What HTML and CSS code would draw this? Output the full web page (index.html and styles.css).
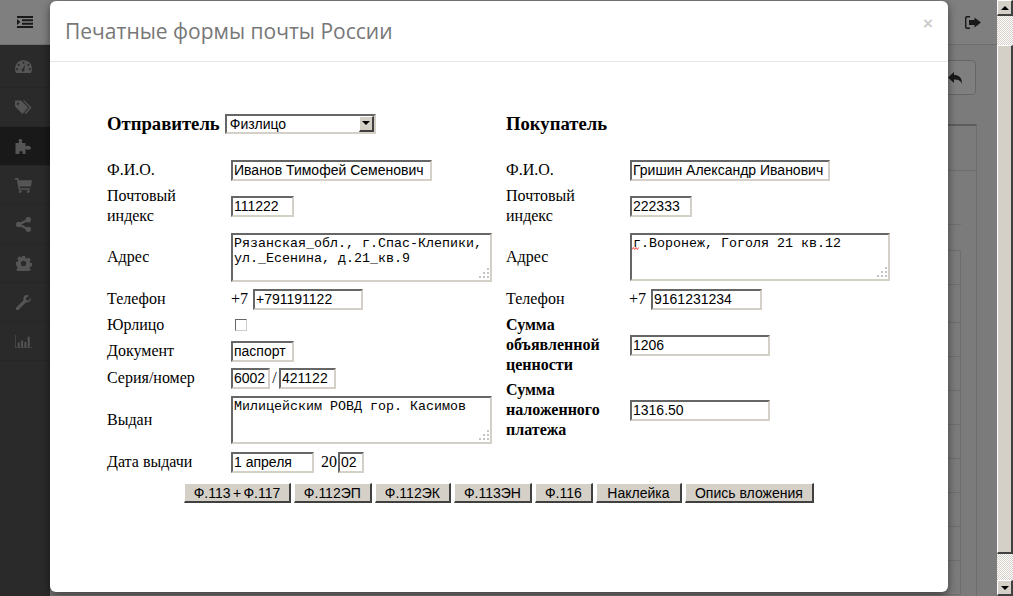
FILE: index.html
```html
<!DOCTYPE html>
<html lang="ru">
<head>
    <meta charset="UTF-8">
    <title>Печатные формы почты России</title>
    <link rel="stylesheet" href="styles.css">
</head>
<body>
    <div class="viewport">
        <div class="sidebar">
            <div class="sidebar-top">
                <svg class="icon-toggle" viewBox="0 0 16 12"><path d="M0 0h16v2H0zM5 3.3h11v2H5zM5 6.7h11v2H5zM0 10h16v2H0zM0 3l3.5 3L0 9z"/></svg>
            </div>
            <div class="side-item side-first">
                <svg viewBox="0 0 16 12"><path fill-rule="evenodd" d="M8 0a8 8 0 0 1 8 8c0 1.500-.3 2.800-1 4H1C.3 10.800 0 9.500 0 8a8 8 0 0 1 8-8zM8 1.500a1 1 0 1 0 0 2 1 1 0 0 0 0-2zM3.500 3.500a1 1 0 1 0 0 2 1 1 0 0 0 0-2zM12.500 3.500a1 1 0 1 0 0 2 1 1 0 0 0 0-2zM2 7.500a1 1 0 1 0 0 2 1 1 0 0 0 0-2zM14 7.500a1 1 0 1 0 0 2 1 1 0 0 0 0-2zM9.500 4L7.200 8.200a1.300 1.300 0 1 0 1.600.6z"/></svg>
            </div>
            <div class="side-item">
                <svg viewBox="0 0 17 14"><path fill-rule="evenodd" d="M0 1a1 1 0 0 1 1-1h5l7 7-5.500 6.500L0 6zM3 2a1.200 1.200 0 1 0 0 2.400A1.200 1.200 0 0 0 3 2z"/><path d="M8 0h1.500l7 7-5.500 6.500-1.300-1 4.800-5.500z"/></svg>
            </div>
            <div class="side-item side-active">
                <svg viewBox="0 0 16 15"><path d="M5 0c1.500 0 2 1 1.500 2.500L6.500 4H10v3.500c1.500-.8 2.500-.8 4-.2 1 .5 1.500 1 1.500 1.700s-.5 1.200-1.500 1.500c-1.500.5-2.500.2-4-.5V15H7c.5-2-.2-3-1.500-3S3.500 13 4 15H0V4h3.500c.3-1.500-.5-1.500-.5-2.500C3 .5 4 0 5 0z"/></svg>
            </div>
            <div class="side-item">
                <svg viewBox="0 0 16 14"><path d="M0 0h3l.4 2H16l-1 6H4.500l.3 1.500H14V11H3.500L1.800 1.500H0z"/><circle cx="5" cy="12.700" r="1.300"/><circle cx="12.500" cy="12.700" r="1.300"/></svg>
            </div>
            <div class="side-item">
                <svg viewBox="0 0 14 14"><circle cx="11.500" cy="2.500" r="2.500"/><circle cx="2.500" cy="7" r="2.500"/><circle cx="11.500" cy="11.500" r="2.500"/><path d="M2.500 7l9-4.500M2.500 7l9 4.500" stroke-width="2" class="share-line"/></svg>
            </div>
            <div class="side-item">
                <svg viewBox="0 0 14 14"><path fill-rule="evenodd" d="M5.500 0h3l.4 2 1.200.5L11.800 1.400l2 2-1.100 1.700.5 1.200 1.800.3v3l-1.800.4-.5 1.200 1.100 1.600-2 2-1.700-1.100-1.200.5-.4 1.800h-3l-.4-1.800-1.200-.5-1.600 1.100-2-2 1.100-1.700-.5-1.200L0 8.500v-3l1.800-.3.500-1.200L1.200 2.300l2-2L4.900 1.500 6 1zM7 4.500a2.500 2.500 0 1 0 0 5 2.500 2.500 0 0 0 0-5z"/></svg>
            </div>
            <div class="side-item">
                <svg viewBox="0 0 15 15"><path d="M10.500 0c1 0 2 .3 2.500.8L9.800 3.300l.6 2 2 .5L15 2.800c.3 2.700-2.300 5.400-5.200 4.700L2.800 14.500c-1 1-2 .8-2.500.2-.6-.6-.7-1.600.2-2.400l7-7C6.900 2.700 8 0 10.500 0z"/></svg>
            </div>
            <div class="side-item">
                <svg viewBox="0 0 18 14"><path d="M0 0h.6v13.400H18v.6H0zM3 8h2v5H3zM6.500 6h2v7h-2zM10 7.500h2V13h-2zM13.500 2h2v11h-2z"/></svg>
            </div>
        </div>
        <div class="main">
            <div class="topbar">
                <svg class="icon-logout" viewBox="0 0 16 13"><path d="M5 0v1.400H2.200c-.5 0-.8.300-.8.800v8.600c0 .5.300.8.800.8H5V13H2c-1.200 0-2-.8-2-2V2C0 .8.800 0 2 0z"/><path d="M9.500 1.500L16 6.500l-6.500 5V9H4V4h5.500z"/></svg>
            </div>
            <div class="toolbar">
                <div class="back-btn">
                    <svg viewBox="0 0 14 12"><path d="M6 0v3c5 0 8 2.500 8 9-1.500-3.500-3.500-4.500-8-4.500V11L0 5.500z"/></svg>
                </div>
            </div>
            <div class="panel">
                <div class="panel-heading"></div>
                <div class="panel-rule"></div>
                <div class="grid-rows">
                    <div class="grid-row"></div>
                    <div class="grid-row grid-row-tall"></div>
                    <div class="grid-row"></div>
                    <div class="grid-row"></div>
                    <div class="grid-row"></div>
                    <div class="grid-row"></div>
                    <div class="grid-row"></div>
                    <div class="grid-row"></div>
                    <div class="grid-row"></div>
                    <div class="grid-row"></div>
                </div>
            </div>
        </div>

        <div class="overlay"></div>

        <div class="modal">
            <div class="modal-header">
                <h4>Печатные формы почты России</h4>
                <span class="close">×</span>
            </div>
            <div class="modal-body">
                <div class="columns">
                    <div class="column">
                        <div class="col-title">
                            <b>Отправитель</b>
                            <div class="select-wrap">
                                <select class="type-select"><option>Физлицо</option></select>
                                <span class="select-btn"><span class="arrow-down"></span></span>
                            </div>
                        </div>
                        <div class="fields sender">
                            <label>Ф.И.О.</label>
                            <div><input class="w-name" type="text" value="Иванов Тимофей Семенович"></div>
                            <label>Почтовый<br>индекс</label>
                            <div><input class="w-zip" type="text" value="111222"></div>
                            <label>Адрес</label>
                            <div class="area-wrap">
                                <textarea class="w-area" spellcheck="false">Рязанская_обл., г.Спас-Клепики, ул._Есенина, д.21_кв.9</textarea>
                                <svg class="grip" viewBox="0 0 11 11"><path d="M8 0h2v2H8zM4 4h2v2H4zM8 4h2v2H8zM0 8h2v2H0zM4 8h2v2H4zM8 8h2v2H8z"/></svg>
                            </div>
                            <label>Телефон</label>
                            <div class="inline"><span class="prefix">+7</span><input class="w-phone" type="text" value="+791191122"></div>
                            <label>Юрлицо</label>
                            <div><input class="check" type="checkbox"></div>
                            <label>Документ</label>
                            <div><input class="w-zip" type="text" value="паспорт"></div>
                            <label>Серия/номер</label>
                            <div class="inline"><input class="w-serial" type="text" value="6002"><span class="slash">/</span><input class="w-number" type="text" value="421122"></div>
                            <label>Выдан</label>
                            <div class="area-wrap">
                                <textarea class="w-area w-area-short" spellcheck="false">Милицейским РОВД гор. Касимов</textarea>
                                <svg class="grip" viewBox="0 0 11 11"><path d="M8 0h2v2H8zM4 4h2v2H4zM8 4h2v2H8zM0 8h2v2H0zM4 8h2v2H4zM8 8h2v2H8z"/></svg>
                            </div>
                            <label>Дата выдачи</label>
                            <div class="inline"><input class="w-date" type="text" value="1 апреля"><span class="century">20</span><input class="w-year" type="text" value="02"></div>
                        </div>
                    </div>
                    <div class="column">
                        <div class="col-title"><b>Покупатель</b></div>
                        <div class="fields buyer">
                            <label>Ф.И.О.</label>
                            <div><input class="w-name-b" type="text" value="Гришин Александр Иванович"></div>
                            <label>Почтовый<br>индекс</label>
                            <div><input class="w-zip-b" type="text" value="222333"></div>
                            <label>Адрес</label>
                            <div class="area-wrap">
                                <textarea class="w-area-b" spellcheck="false">г.Воронеж, Гоголя 21 кв.12</textarea>
                                <svg class="squiggle" viewBox="0 0 8 3"><path d="M0 2.500l1.300-2 1.400 2 1.300-2 1.300 2 1.400-2"/></svg>
                                <svg class="grip" viewBox="0 0 11 11"><path d="M8 0h2v2H8zM4 4h2v2H4zM8 4h2v2H8zM0 8h2v2H0zM4 8h2v2H4zM8 8h2v2H8z"/></svg>
                            </div>
                            <label>Телефон</label>
                            <div class="inline"><span class="prefix prefix-b">+7</span><input class="w-phone-b" type="text" value="9161231234"></div>
                            <label class="strong">Сумма<br>объявленной<br>ценности</label>
                            <div><input class="w-sum" type="text" value="1206"></div>
                            <label class="strong">Сумма<br>наложенного<br>платежа</label>
                            <div><input class="w-sum" type="text" value="1316.50"></div>
                        </div>
                    </div>
                </div>
                <div class="actions">
                    <button type="button" class="btn-first">Ф.113 + Ф.117</button>
                    <button type="button">Ф.112ЭП</button>
                    <button type="button">Ф.112ЭК</button>
                    <button type="button">Ф.113ЭН</button>
                    <button type="button">Ф.116</button>
                    <button type="button" class="btn-wide">Наклейка</button>
                    <button type="button">Опись вложения</button>
                </div>
            </div>
        </div>
    </div>

    <div class="scrollbar">
        <div class="sb-btn"><span class="arrow-up"></span></div>
        <div class="sb-track"><div class="sb-thumb"></div></div>
        <div class="sb-btn"><span class="arrow-down"></span></div>
    </div>
</body>
</html>
```

FILE: styles.css
```css
html, body {
    margin: 0;
    height: 596px;
    overflow: hidden;
}
body {
    display: flex;
    font-family: "Liberation Serif", serif;
    background-color: #f7f7f7;
}
.viewport {
    position: relative;
    flex: 1;
    display: flex;
    overflow: hidden;
}

/* page behind the dialog */
.sidebar {
    width: 50px;
    flex-shrink: 0;
    background-color: #555;
}
.sidebar-top {
    height: 44px;
    background-color: #fff;
    border-bottom: 1px solid #ddd;
    display: flex;
    align-items: center;
    justify-content: center;
}
.icon-toggle {
    width: 16px;
    height: 12px;
    fill: #333;
}
.side-item {
    height: 38px;
    border-bottom: 1px solid #4c4c4c;
    display: flex;
    align-items: center;
    justify-content: center;
    padding-right: 4px;
}
.side-first {
    height: 42px;
}
.side-item svg {
    width: 17px;
    height: 15px;
    fill: #aaa;
}
.share-line {
    stroke: #aaa;
    fill: none;
}
.side-active {
    background-color: #333;
}
.main {
    flex: 1;
    min-width: 0;
}
.topbar {
    height: 44px;
    background-color: #fff;
    border-bottom: 1px solid #ddd;
    display: flex;
    align-items: center;
    justify-content: flex-end;
    padding-right: 16px;
}
.icon-logout {
    width: 16px;
    height: 13px;
    fill: #333;
}
.toolbar {
    height: 79px;
    display: flex;
    justify-content: flex-end;
    padding: 15px 21px 0 0;
    box-sizing: border-box;
}
.back-btn {
    width: 60px;
    height: 35px;
    background-color: #fff;
    border: 1px solid #ccc;
    border-radius: 4px;
    box-sizing: border-box;
    display: flex;
    align-items: center;
    justify-content: flex-end;
    padding-right: 13px;
}
.back-btn svg {
    width: 14px;
    height: 12px;
    fill: #333;
}
.panel {
    margin-right: 20px;
    border-right: 1px solid #ddd;
    border-top: 2px solid #bbb;
    height: 480px;
}
.panel-heading {
    height: 44px;
    border-bottom: 1px solid #ddd;
}
.panel-rule {
    height: 53px;
    margin-right: 15px;
    border-bottom: 1px solid #ddd;
}
.grid-rows {
    margin: 25px 15px 0 0;
    border-right: 1px solid #ddd;
    border-top: 1px solid #ddd;
}
.grid-row {
    height: 33px;
    border-bottom: 1px solid #ddd;
}
.grid-row-tall {
    height: 37px;
}
.overlay {
    position: absolute;
    inset: 0;
    background-color: rgba(0, 0, 0, 0.5);
}

/* dialog */
.modal {
    position: absolute;
    left: 50px;
    top: 1px;
    width: 898px;
    height: 591px;
    background-color: #fff;
    border-radius: 6px;
    box-shadow: 0 3px 9px rgba(0, 0, 0, 0.5);
}
.modal-header {
    height: 60px;
    border-bottom: 1px solid #e5e5e5;
    display: flex;
    align-items: center;
    justify-content: space-between;
    padding: 0 15px;
}
.modal-header h4 {
    margin: 0;
    font-family: "Open Sans", sans-serif;
    font-size: 21px;
    font-weight: 400;
    color: #777;
}
.close {
    font-family: "Liberation Sans", sans-serif;
    font-size: 17px;
    font-weight: bold;
    color: #ccc;
    margin: -14px 0 0;
}
.modal-body {
    padding: 48px 0 0 57px;
}
.columns {
    display: flex;
}
.column {
    width: 399px;
}
.col-title {
    height: 27px;
    display: flex;
    align-items: center;
    gap: 5px;
    margin-bottom: 20px;
    font-size: 18.67px;
}
.fields {
    display: grid;
    grid-template-columns: 124px 1fr;
    align-items: center;
    font-size: 16px;
    line-height: 20px;
    color: #000;
}
.sender {
    grid-template-rows: 26px 46px 56px 28px 24px 28px 26px 58px 26px;
}
.buyer {
    grid-template-rows: 26px 46px 56px 28px 64px 66px;
}
.strong {
    font-weight: bold;
}
.inline {
    display: flex;
    align-items: center;
}
.area-wrap {
    position: relative;
    display: flex;
}
.prefix {
    width: 22px;
}
.prefix-b {
    margin-left: -1px;
}
.slash {
    width: 9px;
    text-align: center;
}
.century {
    margin-left: 7px;
    width: 17px;
}

/* form controls, old windows look */
input[type="text"], textarea, .type-select {
    display: block;
    box-sizing: border-box;
    margin: 0;
    border-width: 2px;
    border-style: solid;
    border-color: #666 #d4d0c8 #d4d0c8 #666;
    border-radius: 0;
    background-color: #fff;
    color: #000;
    outline: none;
}
input[type="text"] {
    height: 21px;
    padding: 0 1px 0 1px;
    font-family: "Liberation Sans", sans-serif;
    font-size: 14px;
}
textarea {
    padding: 1px;
    font-family: "Liberation Mono", monospace;
    font-size: 13.33px;
    line-height: 15px;
    resize: none;
    overflow: hidden;
}
.select-wrap {
    position: relative;
}
.type-select {
    appearance: none;
    width: 151px;
    height: 20px;
    padding: 0 0 0 3px;
    font-family: "Liberation Sans", sans-serif;
    font-size: 14px;
}
.select-btn {
    position: absolute;
    right: 2px;
    top: 2px;
    width: 15px;
    height: 16px;
    box-sizing: border-box;
    background-color: #d4d0c8;
    border-width: 1px 2px 2px 1px;
    border-style: solid;
    border-color: #fff #404040 #404040 #fff;
    display: flex;
    align-items: center;
    justify-content: center;
}
.check {
    appearance: none;
    display: block;
    width: 12px;
    height: 12px;
    margin: 0 0 0 4px;
    border-width: 1px;
    border-style: solid;
    border-color: #666 #ccc #ccc #666;
    background-color: #fff;
}
.w-name { width: 201px; }
.w-zip { width: 63px; }
.w-phone { width: 110px; }
.w-serial { width: 39px; }
.w-number { width: 57px; }
.w-date { width: 83px; }
.w-year { width: 26px; }
.w-area { width: 261px; height: 49px; }
.w-area-short { height: 48px; }
.w-name-b { width: 200px; }
.w-zip-b { width: 62px; }
.w-phone-b { width: 111px; }
.w-area-b { width: 260px; height: 48px; }
.w-sum { width: 140px; }
.grip {
    position: absolute;
    left: 248px;
    bottom: 3px;
    width: 11px;
    height: 11px;
    fill: #c4c4c4;
}
.buyer .grip {
    left: 247px;
}
.squiggle {
    position: absolute;
    left: 2px;
    top: 14px;
    width: 8px;
    height: 3px;
    fill: none;
    stroke: #e00;
    stroke-width: 0.7;
}
.actions {
    display: flex;
    justify-content: center;
    gap: 3px;
    margin: 8px 0 0 -57px;
}
button {
    height: 20px;
    padding: 0 9px;
    box-sizing: border-box;
    background-color: #d4d0c8;
    border-width: 1px 2px 2px 1px;
    border-style: solid;
    border-color: #fff #404040 #404040 #fff;
    border-radius: 0;
    font-family: "Liberation Sans", sans-serif;
    font-size: 14px;
    color: #000;
}
.btn-first {
    padding: 0 8.5px;
    word-spacing: -1.5px;
}
.btn-wide {
    padding: 0 10.5px;
}

/* browser scrollbar */
.scrollbar {
    width: 16px;
    flex-shrink: 0;
    display: flex;
    flex-direction: column;
    position: relative;
}
.sb-btn {
    height: 16px;
    box-sizing: border-box;
    background-color: #d4d0c8;
    border-width: 1px 2px 2px 1px;
    border-style: solid;
    border-color: #fff #404040 #404040 #fff;
    display: flex;
    align-items: center;
    justify-content: center;
}
.arrow-up {
    border-left: 4px solid transparent;
    border-right: 4px solid transparent;
    border-bottom: 4px solid #000;
}
.arrow-down {
    border-left: 4px solid transparent;
    border-right: 4px solid transparent;
    border-top: 4px solid #000;
}
.sb-track {
    flex: 1;
    display: flex;
    padding: 29px 0 26px;
    background: repeating-conic-gradient(#d4d0c8 0 25%, #fff 0 50%) 0 0 / 2px 2px;
}
.sb-thumb {
    flex: 1;
    background-color: #d4d0c8;
    border-width: 1px 2px 2px 1px;
    border-style: solid;
    border-color: #fff #404040 #404040 #fff;
}
```
